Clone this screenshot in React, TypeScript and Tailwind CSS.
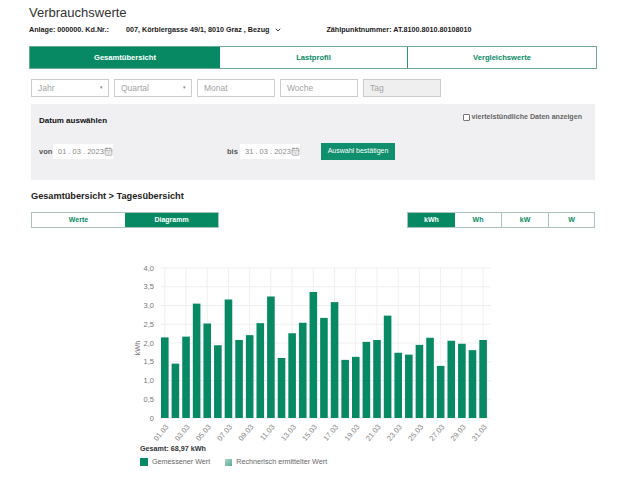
import React from 'react';
import { CalendarDays, ChevronDown } from 'lucide-react';

const values = [
  2.15, 1.45, 2.17, 3.05, 2.52, 1.94, 3.16, 2.08, 2.21, 2.53, 3.24, 1.6, 2.26, 2.54, 3.36, 2.67,
  3.09, 1.55, 1.63, 2.03, 2.08, 2.73, 1.74, 1.69, 1.95, 2.14, 1.39, 2.06, 1.98, 1.81, 2.08,
];

const ticks = ['4,0', '3,5', '3,0', '2,5', '2,0', '1,5', '1,0', '0,5', '0'];

// chart coordinates inside the svg (svg starts at x=120, y=260)
const LEFT = 41;
const STEP = 10.61;
const ZERO = 158;
const UNIT = 37.5;

const Chart = () => (
  <svg width={380} height={184} className="block" style={{ fontFamily: '"Liberation Sans", Arial, sans-serif' }}>
    {ticks.map((t, i) => {
      const y = ZERO - (8 - i) * (UNIT / 2);
      return (
        <g key={t}>
          <line x1={LEFT} x2={371} y1={y} y2={y} stroke="#efefef" strokeWidth={1} />
          <text x={34} y={y + 2.5} textAnchor="end" fontSize={7.5} fill="#777">
            {t}
          </text>
        </g>
      );
    })}
    {values.map((_, i) =>
      i % 2 === 0 ? (
        <line
          key={i}
          x1={LEFT + 3.75 + i * STEP}
          x2={LEFT + 3.75 + i * STEP}
          y1={8}
          y2={ZERO}
          stroke="#efefef"
          strokeWidth={1}
        />
      ) : null
    )}
    {values.map((v, i) => (
      <rect key={i} x={LEFT + i * STEP} y={ZERO - v * UNIT} width={7.6} height={v * UNIT} fill="#078a64" />
    ))}
    {values.map((_, i) =>
      i % 2 === 0 ? (
        <text
          key={i}
          transform={`translate(${LEFT + 8 + i * STEP},${ZERO + 9}) rotate(-50)`}
          textAnchor="end"
          fontSize={7.5}
          fill="#888"
        >
          {String(i + 1).padStart(2, '0')}.03
        </text>
      ) : null
    )}
    <text transform={`translate(20,88) rotate(-90)`} textAnchor="middle" fontSize={7.5} fill="#777">
      kWh
    </text>
  </svg>
);

const DateField = ({ value }: { value: string }) => (
  <div className="flex h-[15px] w-[60px] items-center justify-between bg-white pl-[5px] pr-[3px] text-[7.5px] text-[#8a8a8a]">
    <span className="whitespace-pre">{value}</span>
    <CalendarDays className="h-[9px] w-[9px] shrink-0 text-[#777]" strokeWidth={1.5} />
  </div>
);

const Field = ({ label, arrow, disabled }: { label: string; arrow?: boolean; disabled?: boolean }) => (
  <div
    className={`flex h-[18px] w-[78px] items-center justify-between border border-[#ccc] pl-1.5 pr-[5px] text-[8.5px] text-[#a3a3a3] ${
      disabled ? 'bg-[#efeff0]' : 'bg-white'
    }`}
  >
    <span>{label}</span>
    {arrow && <span className="text-[5px] text-[#888]">▾</span>}
  </div>
);

export default function App() {
  return (
    <div className="h-[480px] w-[640px] overflow-hidden bg-white pl-[29px] text-black" style={{ fontFamily: '"Liberation Sans", Arial, sans-serif' }}>
      <h1 className="pt-[4px] text-[13px] leading-[17px] text-[#333]">Verbrauchswerte</h1>
      <div className="mt-[3px] flex h-[12px] items-center text-[7.2px] font-bold leading-[12px] text-[#1a1a1a]">
        <span className="w-[97px]">Anlage: 000000. Kd.Nr.:</span>
        <span>007, Körblergasse 49/1, 8010 Graz , Bezug</span>
        <ChevronDown className="ml-[5px] h-[8px] w-[8px]" strokeWidth={2.5} />
        <span className="ml-[44px]">Zählpunktnummer: AT.8100.8010.80108010</span>
      </div>

      <div className="mt-[10px] flex h-[23px] w-[568px] border border-[#6fa896] text-[7.6px] font-bold">
        <div className="flex w-[190px] items-center justify-center bg-[#078a64] text-white">Gesamtübersicht</div>
        <div className="flex w-[188px] items-center justify-center border-r border-[#2f8f72] text-[#078a64]">Lastprofil</div>
        <div className="flex flex-1 items-center justify-center text-[#078a64]">Vergleichswerte</div>
      </div>

      <div className="ml-[2px] mt-[10px] flex gap-[5px]">
        <Field label="Jahr" arrow />
        <Field label="Quartal" arrow />
        <Field label="Monat" />
        <Field label="Woche" />
        <Field label="Tag" disabled />
      </div>

      <div className="ml-[2px] mt-[7px] h-[76px] w-[564px] bg-[#f0f0f2] pl-[8px] pr-[13px]">
        <div className="flex items-start justify-between pt-[8px]">
          <span className="mt-[3px] text-[8px] font-bold leading-[12px] text-[#111]">Datum auswählen</span>
          <label className="flex items-center gap-[2px] text-[7.1px] font-bold leading-[10px] text-[#666]">
            <span className="h-[7px] w-[7px] rounded-[1px] border border-[#777] bg-white" />
            viertelstündliche Daten anzeigen
          </label>
        </div>
        <div className="mt-[16px] flex items-center">
          <span className="w-[14px] text-[7.5px] font-bold text-[#555]">von</span>
          <DateField value="01 . 03 . 2023" />
          <span className="ml-[114px] w-[13px] text-[7.5px] font-bold text-[#555]">bis</span>
          <DateField value="31 . 03 . 2023" />
          <div className="ml-[21px] flex h-[17px] w-[74px] items-center justify-center bg-[#0f8f6d] text-[7px] text-white">
            Auswahl bestätigen
          </div>
        </div>
      </div>

      <h2 className="ml-[2px] mt-[10px] text-[9.2px] font-bold leading-[12px] text-[#222]">Gesamtübersicht &gt; Tagesübersicht</h2>

      <div className="ml-[2px] mt-[10px] flex w-[564px] justify-between text-[7px] font-bold">
        <div className="flex h-[16px] w-[188px] border border-[#a9c4bb]">
          <div className="flex w-[93px] items-center justify-center text-[#078a64]">Werte</div>
          <div className="flex flex-1 items-center justify-center bg-[#078a64] text-white">Diagramm</div>
        </div>
        <div className="flex h-[16px] w-[188px] border border-[#a9c4bb]">
          <div className="flex w-[47px] items-center justify-center bg-[#078a64] text-white">kWh</div>
          <div className="flex w-[47px] items-center justify-center border-r border-[#a9c4bb] text-[#078a64]">Wh</div>
          <div className="flex w-[47px] items-center justify-center border-r border-[#a9c4bb] text-[#078a64]">kW</div>
          <div className="flex flex-1 items-center justify-center text-[#078a64]">W</div>
        </div>
      </div>

      <div className="ml-[91px] mt-[32px]">
        <Chart />
      </div>

      <div className="ml-[111px]">
        <div className="text-[7.2px] font-bold leading-[10px] text-[#333]">Gesamt: 68,97 kWh</div>
        <div className="mt-[3px] flex items-center text-[7.2px] leading-[10px] text-[#666]">
          <span className="h-[8px] w-[8px] bg-[#078a64]" />
          <span className="ml-[4px]">Gemessener Wert</span>
          <span className="ml-[15px] h-[7px] w-[7px] bg-[linear-gradient(135deg,#a9d6c9,#5fa893)]" />
          <span className="ml-[4px]">Rechnerisch ermittelter Wert</span>
        </div>
      </div>
    </div>
  );
}
